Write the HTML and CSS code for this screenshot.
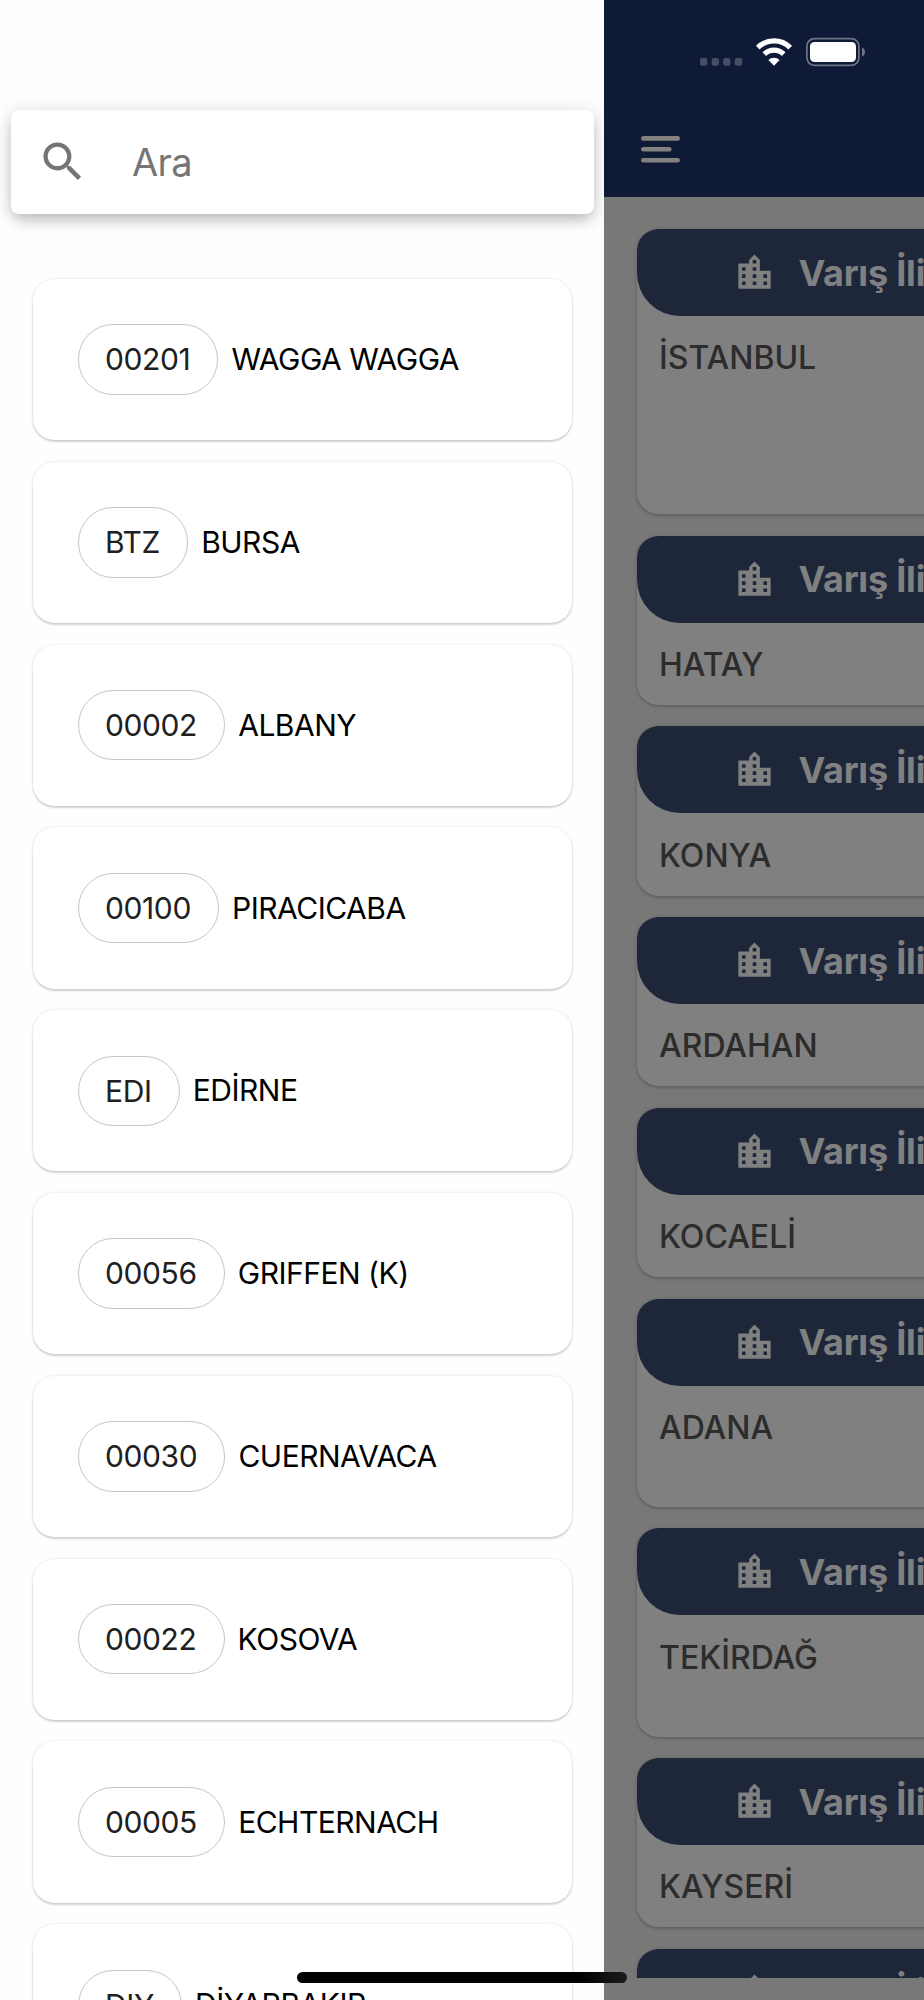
FILE: index.html
```html
<!DOCTYPE html>
<html lang="tr">
<head>
  <meta charset="UTF-8">
  <title>Varış İli</title>
  <meta name="viewport" content="width=device-width, initial-scale=1.0">
  <link rel="stylesheet" href="styles.css">
</head>
<body>
  <svg class="defs" width="0" height="0">
    <symbol id="city" viewBox="0 0 24 24">
      <path d="M15 11V5l-3-3-3 3v2H3v14h18V11h-6zm-8 8H5v-2h2v2zm0-4H5v-2h2v2zm0-4H5V9h2v2zm6 8h-2v-2h2v2zm0-4h-2v-2h2v2zm0-4h-2V9h2v2zm0-4h-2V5h2v2zm6 12h-2v-2h2v2zm0-4h-2v-2h2v2z"/>
    </symbol>
  </svg>

  <!-- Drawer -->
  <aside class="drawer">
    <div class="search">
      <svg class="search-icon" viewBox="0 0 24 24">
        <path d="M15.5 14h-.79l-.28-.27A6.471 6.471 0 0 0 16 9.5 6.5 6.5 0 1 0 9.5 16c1.61 0 3.09-.59 4.23-1.57l.27.28v.79l5 4.99L20.49 19l-4.99-5zm-6 0C7.01 14 5 11.99 5 9.5S7.01 5 9.5 5 14 7.01 14 9.5 11.99 14 9.5 14z"/>
      </svg>
      <span class="search-text">Ara</span>
    </div>
    <div class="list">
      <div class="item"><span class="chip">00201</span><span class="name">WAGGA WAGGA</span></div>
      <div class="item"><span class="chip">BTZ</span><span class="name">BURSA</span></div>
      <div class="item"><span class="chip">00002</span><span class="name">ALBANY</span></div>
      <div class="item"><span class="chip">00100</span><span class="name">PIRACICABA</span></div>
      <div class="item"><span class="chip">EDI</span><span class="name">EDİRNE</span></div>
      <div class="item"><span class="chip">00056</span><span class="name">GRIFFEN (K)</span></div>
      <div class="item"><span class="chip">00030</span><span class="name">CUERNAVACA</span></div>
      <div class="item"><span class="chip">00022</span><span class="name">KOSOVA</span></div>
      <div class="item"><span class="chip">00005</span><span class="name">ECHTERNACH</span></div>
      <div class="item"><span class="chip">DIY</span><span class="name">DİYARBAKIR</span></div>
    </div>
  </aside>

  <!-- Page behind the drawer -->
  <main class="page">
    <header class="appbar">
      <svg class="status" viewBox="0 0 166 30">
        <g fill="#454e63">
          <rect x="0" y="21" width="7.4" height="7.8" rx="2"/>
          <rect x="11.6" y="21" width="7.4" height="7.8" rx="2"/>
          <rect x="23.1" y="21" width="7.4" height="7.8" rx="2"/>
          <rect x="34.7" y="21" width="7.4" height="7.8" rx="2"/>
        </g>
        <g fill="none" stroke="#fff" stroke-width="5.2">
          <path d="M57.8 10.6a23 23 0 0 1 32.4 0"/>
          <path d="M64.3 17.2a13.8 13.8 0 0 1 19.4 0"/>
        </g>
        <path d="M74 28.7l-5.6-5.6a8 8 0 0 1 11.2 0z" fill="#fff"/>
        <rect x="106.9" y="1.7" width="52" height="26.6" rx="7.5" fill="none" stroke="#6e7486" stroke-width="1.7"/>
        <rect x="110" y="5" width="46" height="20" rx="4.5" fill="#fff"/>
        <path d="M162 10.5c4 1.5 4 7.5 0 9z" fill="#6e7486"/>
      </svg>
      <svg class="menu" viewBox="0 0 39 27">
        <path d="M2.3 2.4h34.4M2.3 13.2h26M2.3 24.2h34.4"/>
      </svg>
    </header>
    <div class="cards">
      <div class="card tall"><div class="card-head"><svg class="city"><use href="#city"/></svg>Varış İli</div><p>İSTANBUL</p></div>
      <div class="card"><div class="card-head"><svg class="city"><use href="#city"/></svg>Varış İli</div><p>HATAY</p></div>
      <div class="card"><div class="card-head"><svg class="city"><use href="#city"/></svg>Varış İli</div><p>KONYA</p></div>
      <div class="card"><div class="card-head"><svg class="city"><use href="#city"/></svg>Varış İli</div><p>ARDAHAN</p></div>
      <div class="card"><div class="card-head"><svg class="city"><use href="#city"/></svg>Varış İli</div><p>KOCAELİ</p></div>
      <div class="card mid"><div class="card-head"><svg class="city"><use href="#city"/></svg>Varış İli</div><p>ADANA</p></div>
      <div class="card mid"><div class="card-head"><svg class="city"><use href="#city"/></svg>Varış İli</div><p>TEKİRDAĞ</p></div>
      <div class="card"><div class="card-head"><svg class="city"><use href="#city"/></svg>Varış İli</div><p>KAYSERİ</p></div>
      <div class="card"><div class="card-head"><svg class="city"><use href="#city"/></svg>Varış İli</div></div>
    </div>
  </main>

  <div class="home-bar"></div>
</body>
</html>
```
FILE: styles.css
```css
* {
  box-sizing: border-box;
}

body {
  position: relative;
  display: flex;
  width: 924px;
  height: 2000px;
  margin: 0;
  overflow: hidden;
  background: #787878;
  font-family: Inter, "Liberation Sans", sans-serif;
}

.defs {
  position: absolute;
}

/* drawer */
.drawer {
  flex: none;
  width: 604.4px;
  height: 2000px;
  padding-top: 110px;
  overflow: hidden;
  background: #fefefe;
}

.search {
  display: flex;
  align-items: center;
  width: 583px;
  height: 104px;
  margin-left: 11px;
  padding-left: 26px;
  border-radius: 8px;
  background: #fff;
  box-shadow: 0 7px 14px -2px rgba(0, 0, 0, 0.22), 0 2px 20px rgba(0, 0, 0, 0.12);
}

.search-icon {
  width: 51.6px;
  height: 51.6px;
  fill: #757575;
}

.search-text {
  margin-left: 43.5px;
  color: #757575;
  font-size: 38px;
  letter-spacing: -0.7px;
}

.list {
  display: flex;
  flex-direction: column;
  gap: 21.5px;
  margin: 65px 32px 0 33px;
}

.item {
  display: flex;
  flex: none;
  align-items: center;
  height: 161.3px;
  padding-left: 45px;
  border-radius: 21.5px;
  background: #fff;
  box-shadow: 0 2px 2px rgba(0, 0, 0, 0.15), 0 0 3px rgba(0, 0, 0, 0.12);
}

.chip {
  height: 70.5px;
  padding: 0 27.2px 0 26px;
  border: 1px solid #c6c6c6;
  border-radius: 35px;
  color: #202020;
  font-size: 30px;
  letter-spacing: -0.4px;
  line-height: 68.5px;
}

.name {
  margin: 0 0 1px 13px;
  color: #000;
  font-size: 30px;
  letter-spacing: -0.5px;
}

/* page */
.page {
  flex: 1;
  min-width: 0;
  height: 1978px;
  overflow: hidden;
}

.appbar {
  display: flex;
  flex-direction: column;
  height: 197px;
  padding-top: 37px;
  background: #0e1a36;
}

.status {
  width: 166px;
  height: 30px;
  margin-left: 95.6px;
}

.menu {
  width: 39px;
  height: 27px;
  margin: 69px 0 0 36.6px;
  fill: none;
  stroke: #84827f;
  stroke-width: 4.6;
  stroke-linecap: round;
}

.cards {
  display: flex;
  flex-direction: column;
  gap: 21.5px;
  width: 600px;
  padding: 32.2px 0 0 32.6px;
}

.card {
  flex: none;
  height: 169.3px;
  border-radius: 21.5px;
  background: #808080;
  box-shadow: 0 2px 3px rgba(0, 0, 0, 0.16), 0 0 4px rgba(0, 0, 0, 0.1);
}

.card.mid {
  height: 208.2px;
}

.card.tall {
  height: 284.85px;
}

.card-head {
  display: flex;
  align-items: center;
  height: 87px;
  padding-left: 96.4px;
  border-radius: 21.5px 21.5px 43px 43px;
  background: #1e273a;
  color: #808080;
  font-size: 36px;
  font-weight: 700;
  letter-spacing: -0.2px;
  white-space: nowrap;
}

.city {
  width: 43px;
  height: 43px;
  margin-right: 22px;
  fill: #808080;
}

.card p {
  margin: 22.3px 0 0 22px;
  color: #2c2c2c;
  font-size: 32px;
  font-weight: 500;
  line-height: 40px;
}

.home-bar {
  position: absolute;
  left: 297px;
  top: 1972px;
  width: 330px;
  height: 11px;
  border-radius: 6px;
  background: linear-gradient(90deg, #000 85%, #1c1c1c);
}
```
